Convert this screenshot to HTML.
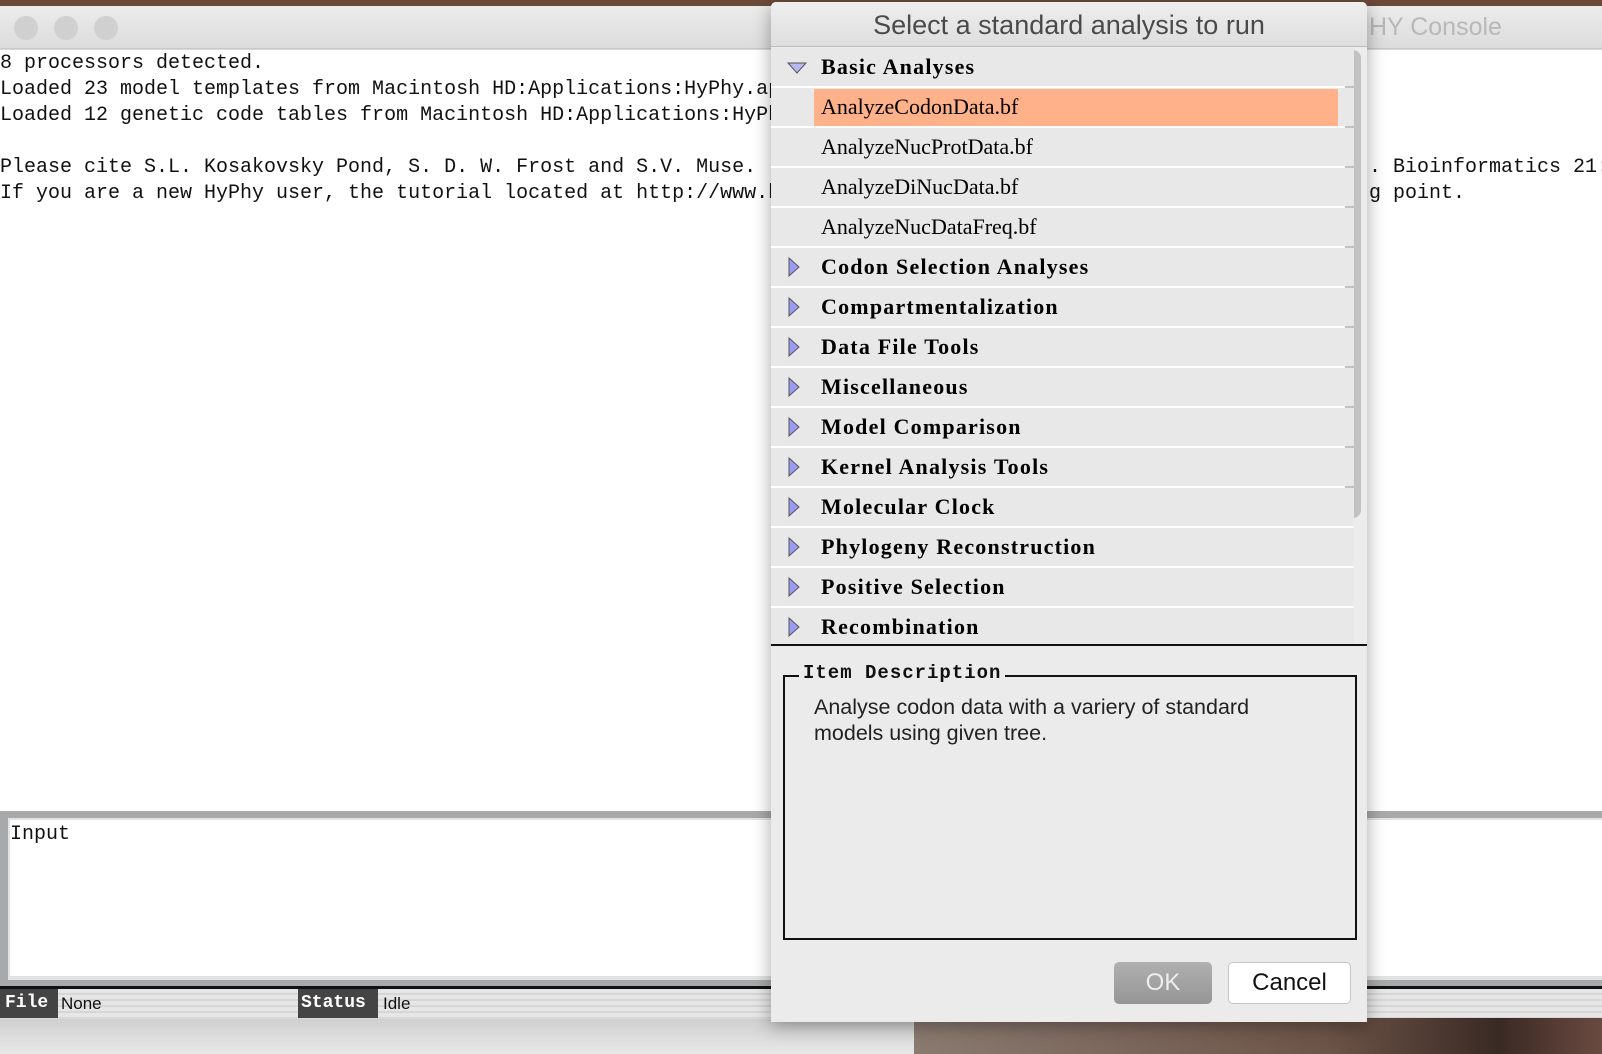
<!DOCTYPE html>
<html><head><meta charset="utf-8"><style>
*{margin:0;padding:0;box-sizing:border-box}
body{width:1602px;height:1054px;overflow:hidden;position:relative;background:#d9d9d9;font-family:"Liberation Sans",sans-serif}
.abs{position:absolute}
.mono{font-family:"Liberation Mono",monospace;font-size:20px;color:#111;white-space:pre;line-height:26px}
.row{position:absolute;left:0;width:583px;height:38px;background:#e8e8e8;font-family:"Liberation Serif",serif;font-size:22px;color:#000;line-height:38px}
.row span{position:absolute;left:50px;letter-spacing:0px}
.row b{position:absolute;left:50px;letter-spacing:1.2px}
.tri{position:absolute;left:16px;top:9px}
</style></head><body>
<div class="abs" style="left:0;top:0;width:1602px;height:8px;background:#6b4a3a"></div>
<div class="abs" style="left:914px;top:1015px;width:688px;height:39px;background:linear-gradient(90deg,#8a7a70,#6d5448 60%,#3a2a24 85%,#6a4a40)"></div>
<div class="abs" style="left:0;top:1019px;width:914px;height:35px;background:linear-gradient(180deg,#cfcfcf,#e8e8e8)"></div>
<div class="abs" style="left:0;top:6px;width:1602px;height:43px;background:linear-gradient(#ececec,#dcdcdc);border-bottom:1px solid #c8c8c8"></div>
<div class="abs" style="left:14px;top:16px;width:24px;height:24px;border-radius:50%;background:#d0d0d0"></div>
<div class="abs" style="left:54px;top:16px;width:24px;height:24px;border-radius:50%;background:#d0d0d0"></div>
<div class="abs" style="left:94px;top:16px;width:24px;height:24px;border-radius:50%;background:#d0d0d0"></div>
<div class="abs" style="left:1369px;top:13px;font-size:25px;color:#b8b8b8">HY Console</div>
<div class="abs" style="left:0;top:50px;width:1602px;height:762px;background:#fff"></div>
<div class="abs mono" style="left:0;top:51px">8 processors detected.
Loaded 23 model templates from Macintosh HD:Applications:HyPhy.ap
Loaded 12 genetic code tables from Macintosh HD:Applications:HyPh

Please cite S.L. Kosakovsky Pond, S. D. W. Frost and S.V. Muse. (
If you are a new HyPhy user, the tutorial located at http://www.h</div>
<div class="abs mono" style="left:1369px;top:155px">. Bioinformatics 21:
g point.</div>
<div class="abs" style="left:0;top:811px;width:1602px;height:177px;background:#a7a9aa"></div>
<div class="abs" style="left:8px;top:818px;width:1594px;height:162px;background:#e2e2e2"></div>
<div class="abs" style="left:10px;top:820px;width:1592px;height:156px;background:#fff"></div>
<div class="abs mono" style="left:10px;top:822px">Input</div>
<div class="abs" style="left:0;top:986px;width:1602px;height:3px;background:#111"></div>
<div class="abs" style="left:0;top:989px;width:1602px;height:29px;background:repeating-linear-gradient(#e6e6e6 0 4px,#d6d6d6 4px 6px)"></div>
<div class="abs" style="left:0;top:989px;width:58px;height:29px;background:#444;color:#fff;font-family:'Liberation Mono',monospace;font-weight:bold;font-size:18px;line-height:29px;padding-left:5px">File</div>
<div class="abs" style="left:61px;top:989px;font-size:17px;line-height:29px;color:#111">None</div>
<div class="abs" style="left:298px;top:989px;width:80px;height:29px;background:#444;color:#fff;font-family:'Liberation Mono',monospace;font-weight:bold;font-size:18px;line-height:29px;padding-left:3px">Status</div>
<div class="abs" style="left:383px;top:989px;font-size:17px;line-height:29px;color:#111">Idle</div>
<div class="abs" style="left:771px;top:2px;width:596px;height:1020px;background:#ebebeb;box-shadow:0 4px 18px rgba(0,0,0,.35);border-radius:5px 5px 0 0">
 <div class="abs" style="left:0;top:0;width:596px;height:45px;background:linear-gradient(#eeeeee,#dedede);border-bottom:1px solid #bdbdbd;border-radius:5px 5px 0 0;text-align:center;font-size:27px;line-height:47px;color:#4a4a4a">Select a standard analysis to run</div>
 <div class="abs" style="left:0;top:46px;width:596px;height:596px;overflow:hidden;background:#fff">
  <div class="abs" style="left:583px;top:0;width:13px;height:596px;background:#ececec"></div>
  <div class="abs" style="left:574px;top:2px;width:16px;height:468px;border-radius:8px;background:#c2c2c2"></div>
  <div class="row" style="top:0"><svg class="tri" width="20" height="14" style="top:13px"><path d="M1 2 L19 2 L10 12 Z" fill="#b8b8f0" stroke="#555" stroke-width="1"/></svg><b>Basic Analyses</b></div>
  <div class="row" style="top:40px"><div class="abs" style="left:43px;top:1px;width:524px;height:37px;background:#ffb18a"></div><span>AnalyzeCodonData.bf</span></div>
  <div class="row" style="top:80px"><span>AnalyzeNucProtData.bf</span></div>
  <div class="row" style="top:120px"><span>AnalyzeDiNucData.bf</span></div>
  <div class="row" style="top:160px"><span>AnalyzeNucDataFreq.bf</span></div>
  <div class="row" style="top:200px"><svg class="tri" width="14" height="20"><path d="M2 1 L12 10 L2 19 Z" fill="#9a9af5" stroke="#555" stroke-width="1"/></svg><b>Codon Selection Analyses</b></div>
  <div class="row" style="top:240px"><svg class="tri" width="14" height="20"><path d="M2 1 L12 10 L2 19 Z" fill="#9a9af5" stroke="#555" stroke-width="1"/></svg><b>Compartmentalization</b></div>
  <div class="row" style="top:280px"><svg class="tri" width="14" height="20"><path d="M2 1 L12 10 L2 19 Z" fill="#9a9af5" stroke="#555" stroke-width="1"/></svg><b>Data File Tools</b></div>
  <div class="row" style="top:320px"><svg class="tri" width="14" height="20"><path d="M2 1 L12 10 L2 19 Z" fill="#9a9af5" stroke="#555" stroke-width="1"/></svg><b>Miscellaneous</b></div>
  <div class="row" style="top:360px"><svg class="tri" width="14" height="20"><path d="M2 1 L12 10 L2 19 Z" fill="#9a9af5" stroke="#555" stroke-width="1"/></svg><b>Model Comparison</b></div>
  <div class="row" style="top:400px"><svg class="tri" width="14" height="20"><path d="M2 1 L12 10 L2 19 Z" fill="#9a9af5" stroke="#555" stroke-width="1"/></svg><b>Kernel Analysis Tools</b></div>
  <div class="row" style="top:440px"><svg class="tri" width="14" height="20"><path d="M2 1 L12 10 L2 19 Z" fill="#9a9af5" stroke="#555" stroke-width="1"/></svg><b>Molecular Clock</b></div>
  <div class="row" style="top:480px"><svg class="tri" width="14" height="20"><path d="M2 1 L12 10 L2 19 Z" fill="#9a9af5" stroke="#555" stroke-width="1"/></svg><b>Phylogeny Reconstruction</b></div>
  <div class="row" style="top:520px"><svg class="tri" width="14" height="20"><path d="M2 1 L12 10 L2 19 Z" fill="#9a9af5" stroke="#555" stroke-width="1"/></svg><b>Positive Selection</b></div>
  <div class="row" style="top:560px"><svg class="tri" width="14" height="20"><path d="M2 1 L12 10 L2 19 Z" fill="#9a9af5" stroke="#555" stroke-width="1"/></svg><b>Recombination</b></div>
 </div>
 <div class="abs" style="left:0;top:642px;width:596px;height:2px;background:#111"></div>
 <div class="abs" style="left:12px;top:673px;width:574px;height:265px;border:2px solid #111"></div>
 <div class="abs" style="left:28px;top:660px;padding:0 4px;background:#ebebeb;font-family:'Liberation Mono',monospace;font-weight:bold;font-size:19px;letter-spacing:1px;color:#111">Item Description</div>
 <div class="abs" style="left:43px;top:692px;font-size:21.5px;line-height:26px;color:#222">Analyse codon data with a variery of standard<br>models using given tree.</div>
 <div class="abs" style="left:343px;top:960px;width:98px;height:42px;border-radius:5px;background:linear-gradient(#b0b0b0,#959595);color:#eee;font-size:24px;text-align:center;line-height:42px">OK</div>
 <div class="abs" style="left:457px;top:960px;width:123px;height:42px;border-radius:5px;background:#fff;border:1px solid #c4c4c4;color:#111;font-size:24px;text-align:center;line-height:40px">Cancel</div>
</div>
</body></html>
